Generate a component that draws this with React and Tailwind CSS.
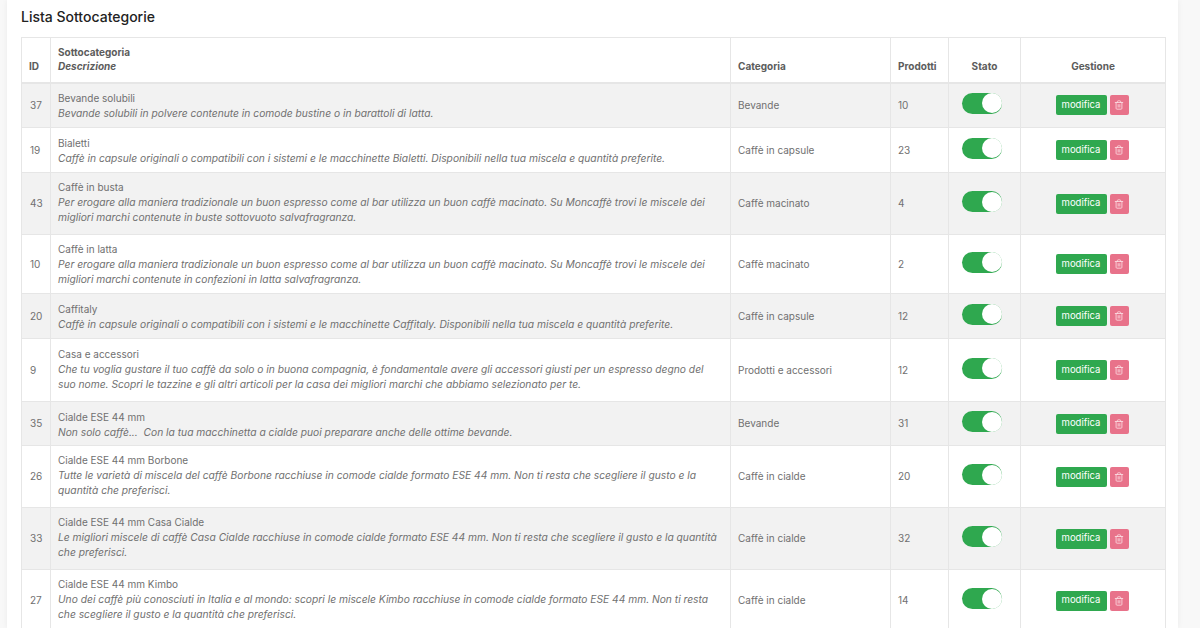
import { Trash2 } from "lucide-react";

const rows = [
  { id: 37, name: "Bevande solubili", desc: ["Bevande solubili in polvere contenute in comode bustine o in barattoli di latta."], cat: "Bevande", n: 10, h: "h-[45px]" },
  { id: 19, name: "Bialetti", desc: ["Caffè in capsule originali o compatibili con i sistemi e le macchinette Bialetti. Disponibili nella tua miscela e quantità preferite."], cat: "Caffè in capsule", n: 23, h: "h-[45px]" },
  { id: 43, name: "Caffè in busta", desc: ["Per erogare alla maniera tradizionale un buon espresso come al bar utilizza un buon caffè macinato. Su Moncaffè trovi le miscele dei", "migliori marchi contenute in buste sottovuoto salvafragranza."], cat: "Caffè macinato", n: 4, h: "h-[62px]", tall: true },
  { id: 10, name: "Caffè in latta", desc: ["Per erogare alla maniera tradizionale un buon espresso come al bar utilizza un buon caffè macinato. Su Moncaffè trovi le miscele dei", "migliori marchi contenute in confezioni in latta salvafragranza."], cat: "Caffè macinato", n: 2, h: "h-[59px]" },
  { id: 20, name: "Caffitaly", desc: ["Caffè in capsule originali o compatibili con i sistemi e le macchinette Caffitaly. Disponibili nella tua miscela e quantità preferite."], cat: "Caffè in capsule", n: 12, h: "h-[45px]" },
  { id: 9, name: "Casa e accessori", desc: ["Che tu voglia gustare il tuo caffè da solo o in buona compagnia, è fondamentale avere gli accessori giusti per un espresso degno del", "suo nome. Scopri le tazzine e gli altri articoli per la casa dei migliori marchi che abbiamo selezionato per te."], cat: "Prodotti e accessori", n: 12, h: "h-[63px]", tall: true },
  { id: 35, name: "Cialde ESE 44 mm", desc: ["Non solo caffè...  Con la tua macchinetta a cialde puoi preparare anche delle ottime bevande."], cat: "Bevande", n: 31, h: "h-[44px]" },
  { id: 26, name: "Cialde ESE 44 mm Borbone", desc: ["Tutte le varietà di miscela del caffè Borbone racchiuse in comode cialde formato ESE 44 mm. Non ti resta che scegliere il gusto e la", "quantità che preferisci."], cat: "Caffè in cialde", n: 20, h: "h-[62px]", tall: true },
  { id: 33, name: "Cialde ESE 44 mm Casa Cialde", desc: ["Le migliori miscele di caffè Casa Cialde racchiuse in comode cialde formato ESE 44 mm. Non ti resta che scegliere il gusto e la quantità", "che preferisci."], cat: "Caffè in cialde", n: 32, h: "h-[62px]", tall: true },
  { id: 27, name: "Cialde ESE 44 mm Kimbo", desc: ["Uno dei caffè più conosciuti in Italia e al mondo: scopri le miscele Kimbo racchiuse in comode cialde formato ESE 44 mm. Non ti resta", "che scegliere il gusto e la quantità che preferisci."], cat: "Caffè in cialde", n: 14, h: "h-[62px]", tall: true },
];

const Toggle = () => (
  <div className="relative -mt-[4px] ml-[13px] h-[21px] w-[40px] rounded-full bg-[#2fa84f]">
    <div className="absolute right-[0.5px] top-[0.5px] h-[20px] w-[20px] rounded-full bg-white" />
  </div>
);

export default function App() {
  return (
    <div className="h-[628px] overflow-hidden bg-[#f8f8f8] pl-[7px] font-['Inter',sans-serif]">
      <div className="h-full w-[1171px] bg-white px-[14px] pt-[8px] shadow-[0_0_6px_rgba(0,0,0,0.06)]">
        <h2 className="mb-[12px] h-[17px] text-[14px] leading-[17px] font-medium text-[#222]">
          Lista Sottocategorie
        </h2>

        <table className="w-[1144px] table-fixed border-collapse border border-[#e6e6e6] text-[10px] text-[#707070]">
          <colgroup>
            <col className="w-[29px]" />
            <col className="w-[680px]" />
            <col className="w-[160px]" />
            <col className="w-[58px]" />
            <col className="w-[72px]" />
            <col className="w-[145px]" />
          </colgroup>
          <thead>
            <tr className="h-[45px] border-b-2 border-[#e6e6e6] align-bottom text-[10px] font-bold text-[#5c5c5c]">
              <th className="border-r border-[#e6e6e6] pb-[8px] pl-[7px] text-left">ID</th>
              <th className="border-r border-[#e6e6e6] pb-[8px] pl-[7px] text-left leading-[14.5px]">
                Sottocategoria
                <br />
                <i>Descrizione</i>
              </th>
              <th className="border-r border-[#e6e6e6] pb-[8px] pl-[7px] text-left">Categoria</th>
              <th className="border-r border-[#e6e6e6] pb-[8px] pl-[7px] text-left">Prodotti</th>
              <th className="border-r border-[#e6e6e6] pb-[8px] text-center">Stato</th>
              <th className="pb-[8px] text-center">Gestione</th>
            </tr>
          </thead>
          <tbody>
            {rows.map((r, i) => (
              <tr key={r.id} className={`${r.h} border-b border-[#e6e6e6] ${i % 2 === 0 ? "bg-[#f2f2f2]" : "bg-white"}`}>
                <td className="border-r border-[#e6e6e6] pl-[8px]">{r.id}</td>
                <td className={`border-r border-[#e6e6e6] pl-[7px] leading-[15px] whitespace-pre ${r.tall ? "pb-[2px]" : r.desc.length === 1 ? "pt-[2px]" : ""}`}>
                  {r.name}
                  {r.desc.map((line) => (
                    <div key={line} className="text-[10.25px] italic">{line}</div>
                  ))}
                </td>
                <td className="border-r border-[#e6e6e6] pl-[7px]">{r.cat}</td>
                <td className="border-r border-[#e6e6e6] pl-[7px]">{r.n}</td>
                <td className="border-r border-[#e6e6e6]"><Toggle /></td>
                <td>
                  <div className="flex items-center justify-center gap-[3px] pr-[2px]">
                    <button className="h-[20px] w-[51px] rounded-[2px] bg-[#2fa84f] text-[9.5px] font-normal text-white">modifica</button>
                    <button className="flex h-[20px] w-[19px] items-center justify-center rounded-[2px] bg-[#e8728a] text-[#fbdde3]">
                      <Trash2 size={10} />
                    </button>
                  </div>
                </td>
              </tr>
            ))}
          </tbody>
        </table>
      </div>
    </div>
  );
}
